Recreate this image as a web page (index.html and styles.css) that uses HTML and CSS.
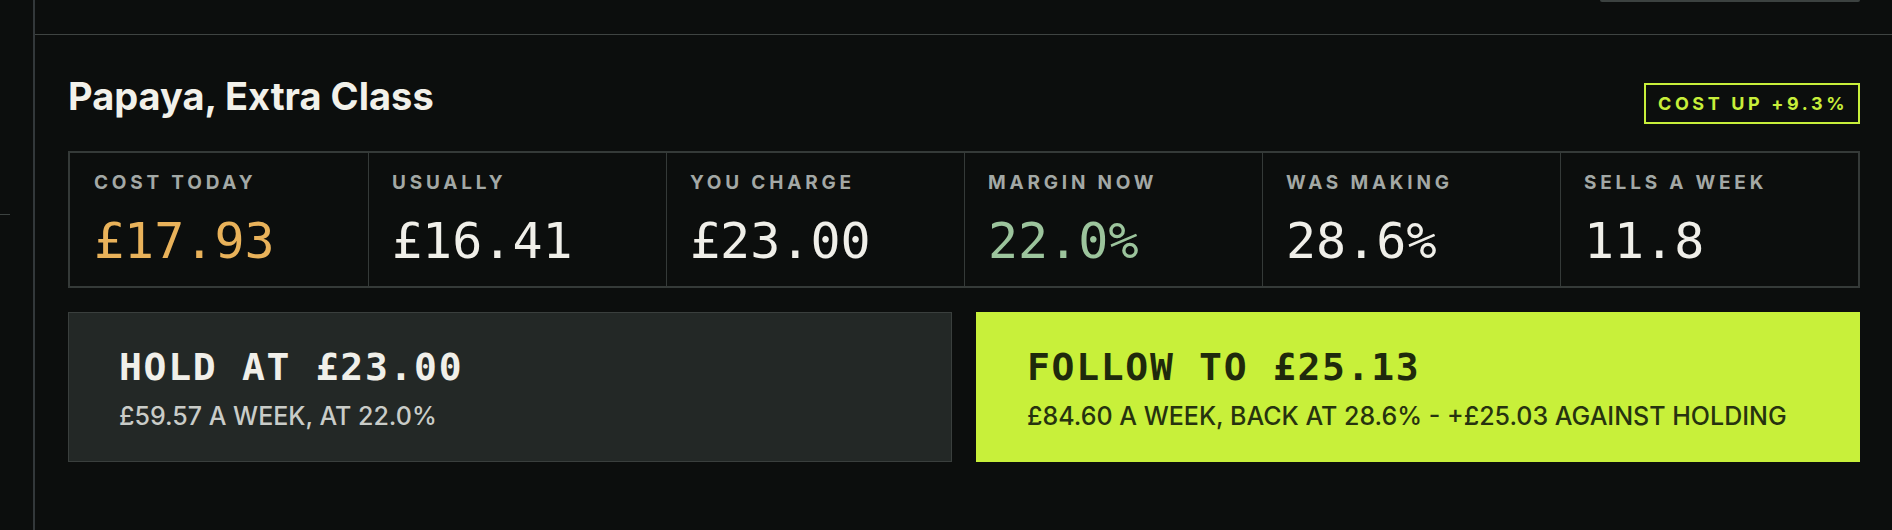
FILE: index.html
```html
<!DOCTYPE html>
<html lang="en">
<head>
<meta charset="utf-8">
<title>Papaya, Extra Class</title>
<link rel="stylesheet" href="styles.css">
</head>
<body>
<div class="app">
  <aside class="rail"><span class="tick"></span></aside>
  <main class="main">
    <div class="topbar"><span class="topbox"></span></div>
    <section class="item">
      <header class="item-head">
        <h1 class="item-title">Papaya, Extra Class</h1>
        <span class="badge">COST UP +9.3%</span>
      </header>
      <div class="stats">
        <div class="stat"><div class="stat-label">COST TODAY</div><div class="stat-value cost">£17.93</div></div>
        <div class="stat"><div class="stat-label">USUALLY</div><div class="stat-value">£16.41</div></div>
        <div class="stat"><div class="stat-label">YOU CHARGE</div><div class="stat-value">£23.00</div></div>
        <div class="stat"><div class="stat-label">MARGIN NOW</div><div class="stat-value margin">22.0%</div></div>
        <div class="stat"><div class="stat-label">WAS MAKING</div><div class="stat-value">28.6%</div></div>
        <div class="stat"><div class="stat-label">SELLS A WEEK</div><div class="stat-value">11.8</div></div>
      </div>
      <div class="actions">
        <div class="action hold">
          <div class="action-title">HOLD AT £23.00</div>
          <div class="action-sub">£59.57 A WEEK, AT 22.0%</div>
        </div>
        <div class="action follow">
          <div class="action-title">FOLLOW TO £25.13</div>
          <div class="action-sub">£84.60 A WEEK, BACK AT 28.6% - +£25.03 AGAINST HOLDING</div>
        </div>
      </div>
    </section>
  </main>
</div>
</body>
</html>
```
FILE: styles.css
```css
* { box-sizing: border-box; }
html, body { margin: 0; padding: 0; }
body {
  background: #0c0e0d;
  color: #f0efe9;
  font-family: Inter, "Liberation Sans", sans-serif;
  width: 1892px;
  height: 530px;
  overflow: hidden;
}
.app { display: flex; height: 530px; }
.rail {
  width: 35px;
  flex: none;
  border-right: 2px solid #33383a;
  display: flex;
  flex-direction: column;
}
.tick {
  display: block;
  width: 10px;
  height: 1px;
  margin-top: 214px;
  background: #3c4240;
}
.main { flex: 1; display: flex; flex-direction: column; }
.topbar {
  height: 35px;
  border-bottom: 1px solid #3f4442;
  display: flex;
  justify-content: flex-end;
  align-items: flex-start;
  padding-right: 32px;
}
.topbox {
  display: block;
  width: 260px;
  height: 2px;
  background: #3c4240;
  border-radius: 0 0 3px 3px;
}
.item { padding: 43px 32px 0 33px; }
.item-head {
  display: flex;
  justify-content: space-between;
  align-items: flex-start;
}
.item-title {
  margin: 0;
  font-size: 38px;
  line-height: 36px;
  font-weight: 700;
  letter-spacing: 0;
  color: #f2f1ea;
}
.badge {
  margin-top: 5px;
  height: 41px;
  width: 216px;
  padding-left: 2px;
  border: 2px solid #c8ef3a;
  color: #c8ef3a;
  font-size: 18px;
  font-weight: 700;
  letter-spacing: 0.2em;
  display: flex;
  align-items: center;
  justify-content: center;
}
.stats {
  margin-top: 27px;
  display: grid;
  grid-template-columns: repeat(6, 1fr);
  border: 2px solid #353a38;
}
.stat {
  padding: 19px 24px 20px 23px;
  border-left: 1px solid #353a38;
}
.stat:first-child { border-left: 0; padding-left: 24px; }
.stat-label {
  font-size: 19px;
  line-height: 22px;
  font-weight: 700;
  letter-spacing: 0.2em;
  color: #a3a8a5;
}
.stat-value {
  margin-top: 22px;
  font-family: "DejaVu Sans Mono", "Liberation Mono", monospace;
  font-size: 50px;
  line-height: 50px;
  color: #f0efe9;
}
.stat-value.cost { color: #e9b25a; }
.stat-value.margin { color: #9cc49c; }
.actions {
  margin-top: 24px;
  display: grid;
  grid-template-columns: 1fr 1fr;
  gap: 24px;
}
.action {
  height: 150px;
  padding: 35px 48px 0 50px;
  border: 1px solid transparent;
}
.hold { background: #232826; border-color: #3a3f3d; color: #f0efe9; }
.follow { background: #c8f03a; border-color: #c8f03a; color: #1f2a0c; }
.action-title {
  font-family: "DejaVu Sans Mono", "Liberation Mono", monospace;
  font-size: 38px;
  line-height: 38px;
  font-weight: 700;
  letter-spacing: 0.045em;
}
.action-sub {
  margin-top: 16px;
  font-size: 25px;
  line-height: 28px;
  font-weight: 500;
  letter-spacing: 0;
}
.hold .action-sub { color: #c9ccc8; }
.follow .action-sub { color: #27330f; }
```
